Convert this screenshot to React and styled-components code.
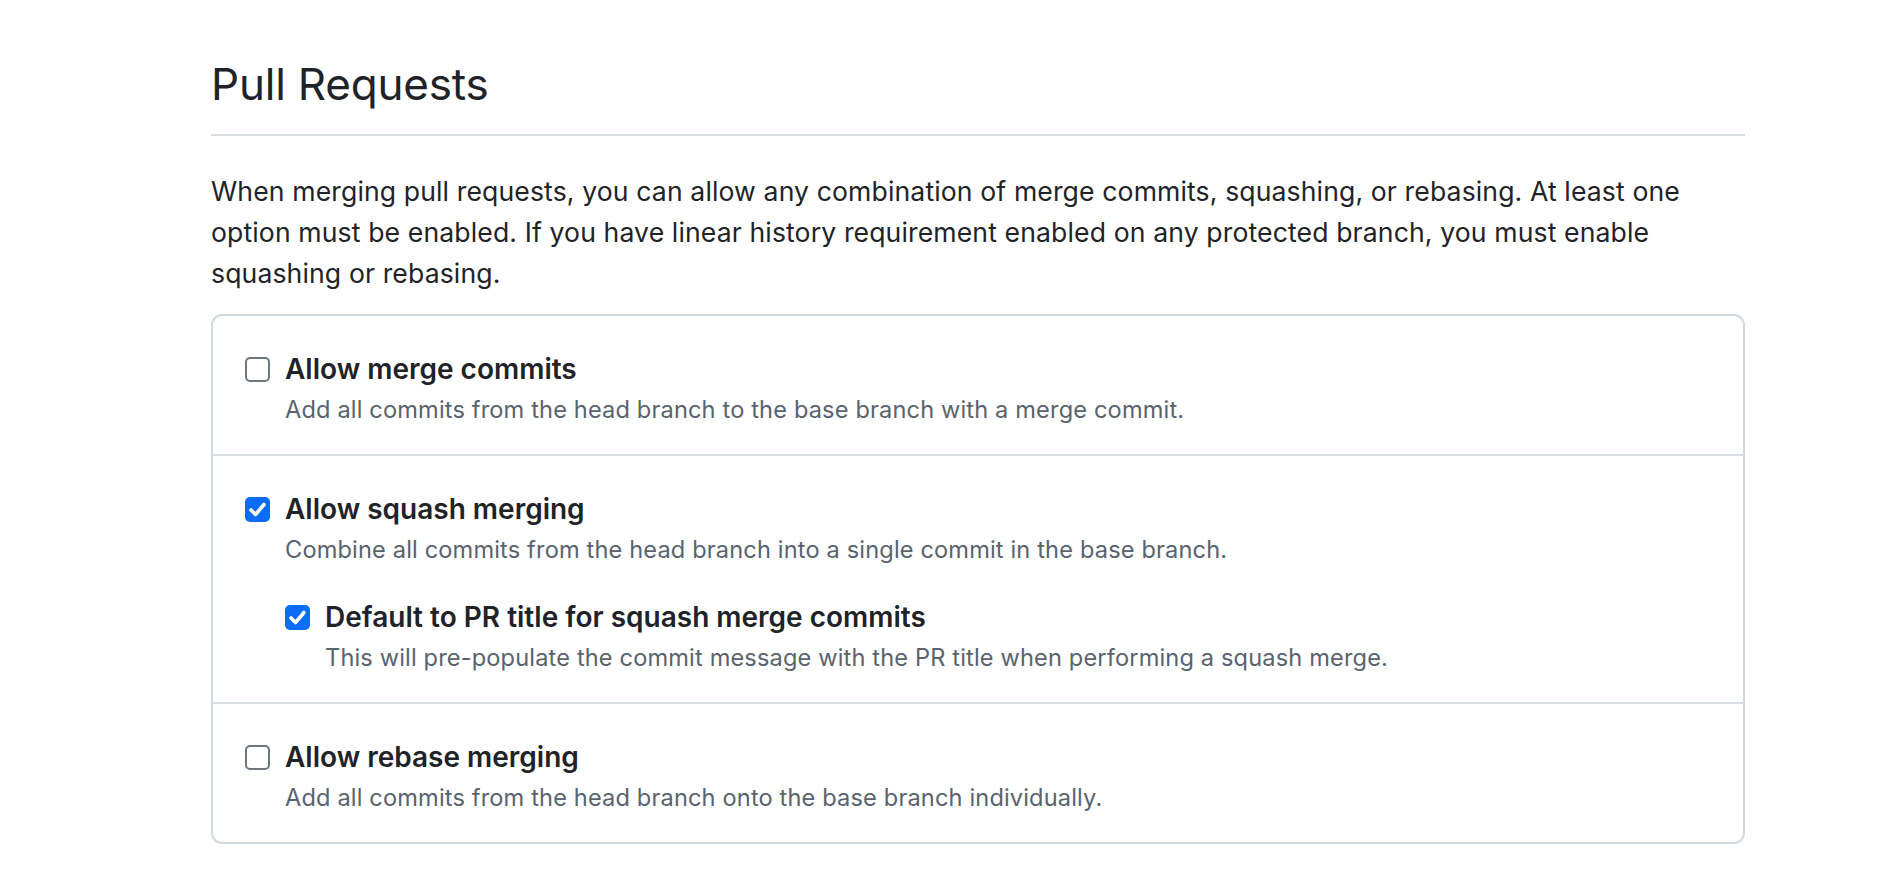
import React from "react";
import styled, { createGlobalStyle } from "styled-components";

const Global = createGlobalStyle`
  html, body { margin: 0; padding: 0; background: #ffffff; }
  body { font-family: Inter, "Noto Sans", "Liberation Sans", sans-serif; color: #1f2328; }
  * { box-sizing: border-box; }
`;

const Page = styled.main`
  padding: 51px 0 0 211px;
`;

const Section = styled.section`
  width: 1534px;
`;

const Subhead = styled.div`
  padding-bottom: 15px;
  border-bottom: 2px solid #d8dee4;
`;

const Heading = styled.h2`
  margin: 0;
  font-size: 44px;
  font-weight: 400;
  line-height: 67.5px;
  color: #1f2328;
  letter-spacing: -0.2px;
`;

const Intro = styled.p`
  margin: 35px 0 20px;
  font-size: 26.6px;
  letter-spacing: 0.12px;
  line-height: 41.3px;
  color: #1f2328;
`;

const Box = styled.div`
  border: 2px solid #d1d9e0;
  border-radius: 11px;
`;

const Row = styled.div`
  padding: 32px 32px 25px;
  & + & {
    border-top: 2px solid #d8dee4;
  }
`;

const Option = styled.label`
  display: grid;
  grid-template-columns: 25px 1fr;
  column-gap: 15px;
  margin-top: ${(p) => (p.$nested ? "27px" : "0")};
  margin-left: ${(p) => (p.$nested ? "40px" : "0")};
`;

const Box25 = styled.span`
  width: 25px;
  height: 25px;
  margin-top: 8.5px;
  border-radius: 5px;
  border: ${(p) => (p.$checked ? "none" : "2px solid #6e7781")};
  background: ${(p) => (p.$checked ? "#0b6cf5" : "#ffffff")};
  display: flex;
  align-items: center;
  justify-content: center;
`;

const Texts = styled.div`
  display: flex;
  flex-direction: column;
`;

const Title = styled.span`
  font-size: 28px;
  line-height: 42px;
  font-weight: 600;
  color: #1f2328;
`;

const Note = styled.span`
  font-size: 23.6px;
  letter-spacing: 0.15px;
  line-height: 39px;
  color: #59636e;
`;

function Checkbox({ checked }) {
  return (
    <Box25 $checked={checked}>
      {checked && (
        <svg width="25" height="25" viewBox="0 0 25 25" aria-hidden="true">
          <path
            d="M6 13 L10.5 17.5 L19 7.5"
            fill="none"
            stroke="#ffffff"
            strokeWidth="3.6"
            strokeLinecap="round"
            strokeLinejoin="round"
          />
        </svg>
      )}
    </Box25>
  );
}

function CheckOption({ checked, title, note, nested }) {
  return (
    <Option $nested={nested}>
      <Checkbox checked={checked} />
      <Texts>
        <Title>{title}</Title>
        <Note>{note}</Note>
      </Texts>
    </Option>
  );
}

export default function App() {
  return (
    <>
      <Global />
      <Page>
        <Section>
          <Subhead>
            <Heading>Pull Requests</Heading>
          </Subhead>
          <Intro>
            When merging pull requests, you can allow any combination of merge commits, squashing, or
            rebasing. At least one option must be enabled. If you have linear history requirement enabled
            on any protected branch, you must enable squashing or rebasing.
          </Intro>
          <Box>
            <Row>
              <CheckOption
                title="Allow merge commits"
                note="Add all commits from the head branch to the base branch with a merge commit."
              />
            </Row>
            <Row>
              <CheckOption
                checked
                title="Allow squash merging"
                note="Combine all commits from the head branch into a single commit in the base branch."
              />
              <CheckOption
                nested
                checked
                title="Default to PR title for squash merge commits"
                note="This will pre-populate the commit message with the PR title when performing a squash merge."
              />
            </Row>
            <Row>
              <CheckOption
                title="Allow rebase merging"
                note="Add all commits from the head branch onto the base branch individually."
              />
            </Row>
          </Box>
        </Section>
      </Page>
    </>
  );
}
